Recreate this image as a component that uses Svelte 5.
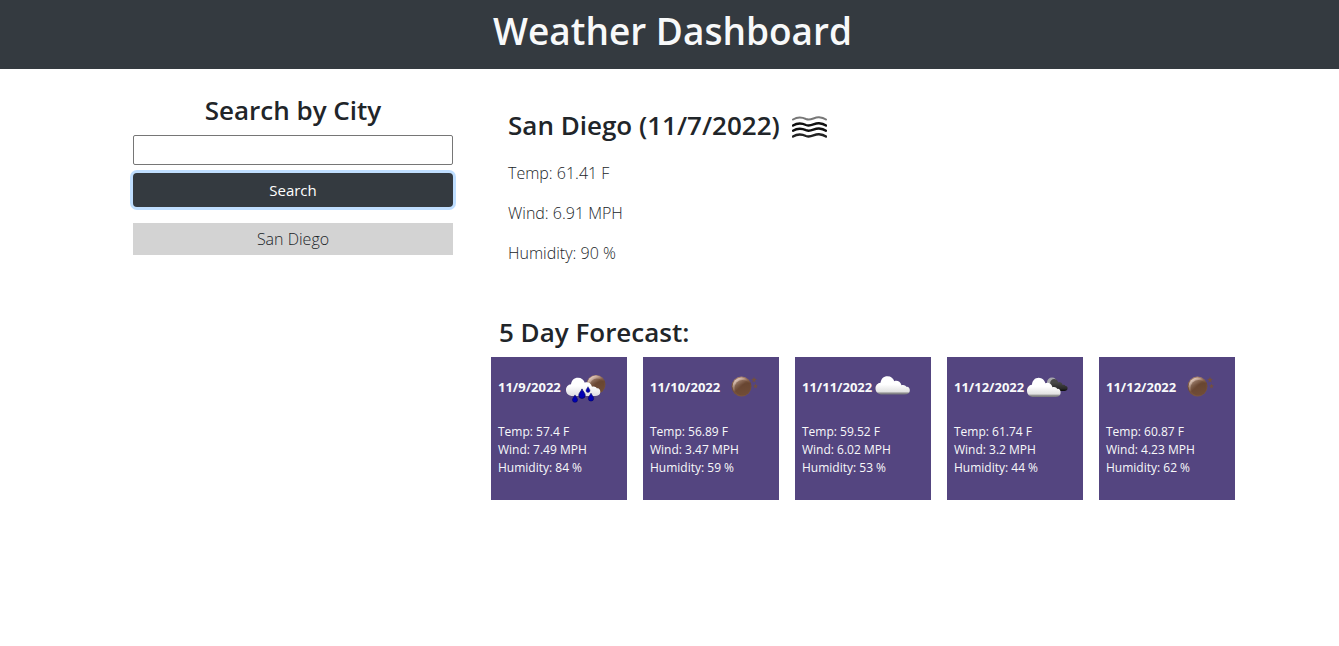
<script>
  let city = $state('');
  const history = ['San Diego'];
  const current = { name: 'San Diego', date: '11/7/2022', temp: '61.41', wind: '6.91', humidity: 90 };
  const forecast = [
    { date: '11/9/2022', icon: 'rain', temp: '57.4', wind: '7.49', humidity: 84 },
    { date: '11/10/2022', icon: 'clear', temp: '56.89', wind: '3.47', humidity: 59 },
    { date: '11/11/2022', icon: 'cloud', temp: '59.52', wind: '6.02', humidity: 53 },
    { date: '11/12/2022', icon: 'broken', temp: '61.74', wind: '3.2', humidity: 44 },
    { date: '11/12/2022', icon: 'clear', temp: '60.87', wind: '4.23', humidity: 62 }
  ];
</script>

<svg class="defs" width="0" height="0" aria-hidden="true">
  <defs>
    <linearGradient id="white" x1="0" y1="0" x2="0" y2="1">
      <stop offset="0.45" stop-color="#fff" />
      <stop offset="0.84" stop-color="#e2e2e2" />
      <stop offset="0.93" stop-color="#8b8b8b" />
      <stop offset="1" stop-color="#77777c" />
    </linearGradient>
    <linearGradient id="pale" x1="0" y1="0" x2="0" y2="1">
      <stop offset="0.45" stop-color="#fff" />
      <stop offset="1" stop-color="#dedee2" />
    </linearGradient>
    <linearGradient id="dark" x1="0" y1="0" x2="0" y2="1">
      <stop offset="0.3" stop-color="#484848" />
      <stop offset="0.8" stop-color="#292929" />
      <stop offset="1" stop-color="#080808" />
    </linearGradient>
    <linearGradient id="moon" x1="0.2" y1="0" x2="0.4" y2="1">
      <stop offset="0" stop-color="#b48c78" />
      <stop offset="0.45" stop-color="#6b4833" />
      <stop offset="1" stop-color="#7c563e" />
    </linearGradient>
    <linearGradient id="shine" x1="0" y1="0" x2="0.7" y2="0.8">
      <stop offset="0.1" stop-color="#f4e2d8" />
      <stop offset="0.65" stop-color="#ecd4c6" stop-opacity="0" />
    </linearGradient>
    <path id="cloud" d="M7 0C2.500 0 0-2.600 0-6C0-9 2-11.400 5-11.700C5.500-15.700 8-18.300 12-18.300C15.500-18.300 17.800-16.200 18.800-13.200C21-14.400 25-13.400 26-9.200C28-10 30-9.200 30.800-7.700C33-8.200 34.600-6.200 34.300-3.800C34.200-1.200 32 0 29 0Z" />
    <path id="drop" d="M0-4C.8-2 2.800-.4 2.800 1.500A2.800 2.800 0 0 1-2.800 1.500C-2.800-.4-.8-2 0-4Z" />
  </defs>
</svg>

<header><h1>Weather Dashboard</h1></header>

<main>
  <aside>
    <form onsubmit={(event) => event.preventDefault()}>
      <h2><label for="city">Search by City</label></h2>
      <input id="city" type="text" bind:value={city} />
      <button class="search" type="submit">Search</button>
    </form>
    {#each history as place}
      <button class="history" type="button">{place}</button>
    {/each}
  </aside>

  <div class="weather">
    <section class="current">
      <h2>
        {current.name} ({current.date})
        <svg width="35" height="24" viewBox="0 0 35 24" fill="none" stroke="#101010" stroke-width="2.4" stroke-linecap="round" role="img" aria-label="Mist">
          <path stroke="#777" stroke-width="2" d="M1 4.500C6 1.500 10 2.200 14 4C19 6.100 22 2 27 2.300C30 2.500 32 3.200 34 4.500" />
          <path d="M1 10.500C6 7.500 10 8.200 14 10C19 12.100 22 8 27 8.300C30 8.500 32 9.200 34 10.500" />
          <path d="M1 15.700C6 12.700 10 13.400 14 15.200C19 17.300 22 13.200 27 13.500C30 13.700 32 14.400 34 15.700" />
          <path stroke="#222" d="M1 21.500C6 18.500 10 19.200 14 21C19 23.100 22 19 27 19.300C30 19.500 32 20.200 34 21.500" />
        </svg>
      </h2>
      <p>Temp: {current.temp} F</p>
      <p>Wind: {current.wind} MPH</p>
      <p>Humidity: {current.humidity} %</p>
    </section>

    <section class="forecast">
      <h2>5 Day Forecast:</h2>
      <div class="cards">
        {#each forecast as day}
          <article>
            <div class="day">
              <h3>{day.date}</h3>
              <svg width="50" height="50" viewBox="0 0 50 50" role="img" aria-label={day.icon}>
                {#if day.icon === 'rain'}
                  <g transform="translate(2)">
                    <circle cx="31" cy="22.500" r="9.500" fill="url(#moon)" />
                    <circle cx="31" cy="22.500" r="9" fill="url(#shine)" />
                    <circle cx="32" cy="24" r="7.400" fill="#65442f" fill-opacity="0.5" />
                    <use href="#cloud" x="1" y="34" fill="url(#pale)" />
                    <g fill="#0000b4" stroke="#00005e" stroke-width="0.6">
                      <use href="#drop" transform="translate(10 36.500) scale(.9)" />
                      <use href="#drop" transform="translate(17 31.500) scale(1.150)" />
                      <use href="#drop" transform="translate(23 27.500) scale(.7)" />
                      <use href="#drop" transform="translate(26 35) scale(.95)" />
                    </g>
                  </g>
                {:else if day.icon === 'clear'}
                  <g transform="translate(-2)">
                    <circle cx="21.500" cy="24.500" r="10" fill="url(#moon)" />
                    <circle cx="21.500" cy="24.500" r="9" fill="url(#shine)" />
                    <circle cx="22.500" cy="25.800" r="7.800" fill="#65442f" fill-opacity="0.5" />
                    <g fill="#74503c">
                      <path d="M34 14.500L34.700 16.800L37 17L35.100 18.200L35.700 20.500L34 19.200L32.300 20.500L32.900 18.200L31 17L33.300 16.800Z" />
                      <path d="M35.500 21.500L36.100 23.300L38 23.500L36.500 24.500L37 26.500L35.500 25.300L34 26.500L34.500 24.500L33 23.500L34.900 23.300Z" />
                    </g>
                  </g>
                {:else if day.icon === 'cloud'}
                  <use href="#cloud" x="1.500" y="32.500" fill="url(#white)" />
                {:else}
                  <circle cx="26" cy="20.500" r="5" fill="#a5a5aa" />
                  <use href="#cloud" transform="translate(21 29) scale(.6 .65)" fill="url(#dark)" />
                  <use href="#cloud" transform="translate(1 35) scale(.98 1.050)" fill="url(#white)" />
                {/if}
              </svg>
            </div>
            <p>Temp: {day.temp} F</p>
            <p>Wind: {day.wind} MPH</p>
            <p>Humidity: {day.humidity} %</p>
          </article>
        {/each}
      </div>
    </section>
  </div>
</main>

<style>
  :global(body) {
    background: #fff;
    color: #212529;
    font-family: "Segoe UI", "Open Sans", sans-serif;
    font-size: 16px;
    line-height: 24px;
  }

  h1, h2, h3, p { margin: 0; }
  .defs { display: block; }
  button, input { box-sizing: border-box; width: 100%; font-family: inherit; font-size: 15px; }

  header {
    padding: 7px 0 14px 6px;
    background: #343a40;
    color: #f8f9fa;
    text-align: center;
  }

  h1 { font-size: 37px; line-height: 48px; font-weight: 600; }
  h2 { font-size: 26px; line-height: 34px; font-weight: 600; }

  main {
    display: grid;
    grid-template-columns: 320px minmax(0, 1fr);
    gap: 38px;
    box-sizing: border-box;
    max-width: 1139px;
    margin: 0 auto;
    padding: 24px 4px 24px 33px;
  }

  aside, form { display: flex; flex-direction: column; }
  aside { gap: 16px; text-align: center; }
  form { gap: 8px; }

  input {
    height: 30px;
    border: 1px solid #767676;
    border-radius: 2px;
  }

  .search {
    height: 34px;
    border: 0;
    border-radius: 4px;
    background: #343a40;
    box-shadow: 0 0 0 3px #bfdeff;
    color: #fff;
  }

  .history {
    height: 32px;
    border: 0;
    background: #d3d3d3;
    color: #212529;
    font-size: 16px;
    font-weight: 300;
  }

  .current { padding: 15px 17px 0; font-weight: 300; }
  .current h2 { display: flex; align-items: center; gap: 12px; margin-bottom: 19px; }
  .current svg { margin-top: 4px; }
  .current p { margin-bottom: 16px; }
  .forecast { margin-top: 50px; }
  .forecast h2 { padding: 0 8px; margin: 0 0 8px; }

  .cards {
    display: grid;
    grid-template-columns: repeat(5, minmax(0, 1fr));
    gap: 16px;
  }

  article {
    padding: 5px 7px 23px;
    background: #544580;
    color: #f8f9fa;
    font-size: 12px;
    line-height: 18px;
  }

  .day { display: flex; align-items: center; gap: 2px; margin-bottom: 11px; }
  .day svg { flex: none; }
  h3 { font-size: 13px; line-height: 18px; font-weight: 700; }
</style>
